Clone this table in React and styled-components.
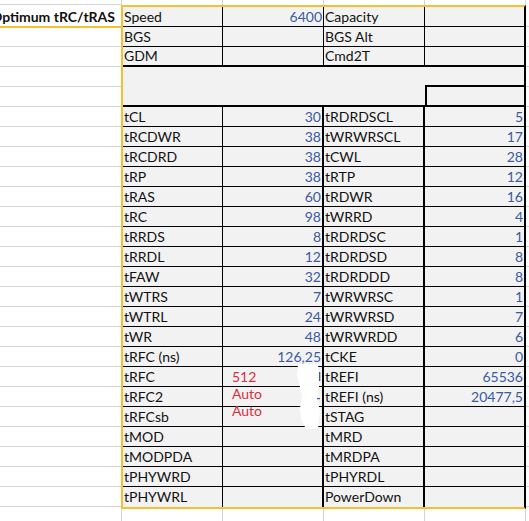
import React from "react";
import styled, { createGlobalStyle } from "styled-components";

const GRID = "#d4d4d4";
const GOLD = "#f6c130";
const FILL = "#f2f2f2";
const INK = "#111";
const BLUE = "#3a5ba0";
const RED = "#d5303e";

const GlobalStyle = createGlobalStyle`
  html, body { margin: 0; padding: 0; background: #fff; }
  body { font-family: Lato, "Open Sans", sans-serif; }
`;

const Sheet = styled.div`
  position: relative;
  width: 529px;
  height: 521px;
  overflow: hidden;
  display: flex;
  flex-direction: column;
  font-family: Lato, "Open Sans", sans-serif;
  font-size: 14px;
  color: ${INK};
  background: #fff;
`;

const Strip = styled.div`
  display: flex;
  flex: none;
  height: ${(p) => p.$h}px;
`;

const StripCell = styled.div`
  flex: ${(p) => (p.$w ? "none" : "1")};
  width: ${(p) => (p.$w ? `${p.$w}px` : "auto")};
  box-sizing: border-box;
  border-right: ${(p) => (p.$w ? `1px solid ${GRID}` : "none")};
  border-bottom: ${(p) => (p.$line ? `1px solid ${GRID}` : "none")};
`;

const Middle = styled.div`
  display: flex;
  flex: none;
  height: 504px;
`;

const SideColumn = styled.div`
  flex: none;
  width: ${(p) => (p.$w ? `${p.$w}px` : "auto")};
  flex-grow: ${(p) => (p.$w ? 0 : 1)};
  padding-top: 2px;
  display: flex;
  flex-direction: column;
  box-sizing: border-box;
`;

const SideCell = styled.div`
  flex: none;
  height: ${(p) => p.$h || 20}px;
  box-sizing: border-box;
  border-bottom: ${(p) => (p.$gold ? `2px solid ${GOLD}` : `1px solid ${GRID}`)};
  display: flex;
  align-items: center;
  justify-content: flex-end;
  padding-right: 6px;
  overflow: hidden;
  white-space: nowrap;
  font-weight: 700;
  letter-spacing: 0;
`;

const Table = styled.div`
  flex: none;
  width: 405px;
  box-sizing: border-box;
  border-top: 2px solid ${GOLD};
  border-left: 2px solid ${GOLD};
  border-bottom: 2px solid ${GOLD};
  border-right: 2px solid #000;
  display: grid;
  grid-template-columns: 100px 101px 101px 99px;
  grid-template-rows: repeat(25, 20px);
  background: ${FILL};
`;

const Cell = styled.div`
  box-sizing: border-box;
  background: ${FILL};
  border-bottom: ${(p) => p.$bb || 0}px solid #000;
  border-right: ${(p) => p.$br || 0}px solid #000;
  border-left: ${(p) => p.$bl || 0}px solid #000;
  display: flex;
  align-items: center;
  justify-content: ${(p) => (p.$kind === "num" ? "flex-end" : "flex-start")};
  padding-left: ${(p) => (p.$kind === "red" ? 9 : 1)}px;
  padding-right: 1px;
  padding-bottom: ${(p) => (p.$lift || 0) * 2}px;
  color: ${(p) => (p.$kind === "num" ? BLUE : p.$kind === "red" ? RED : INK)};
  white-space: nowrap;
  overflow: ${(p) => (p.$kind === "red" ? "visible" : "hidden")};
  line-height: 1;
`;

const Merged = styled.div`
  grid-column: 1 / span 3;
  grid-row: span 2;
  box-sizing: border-box;
  background: ${FILL};
  border-bottom: 2px solid #000;
`;

const Redaction = styled.svg`
  position: absolute;
  left: 294px;
  top: 360px;
  width: 30px;
  height: 72px;
  pointer-events: none;
`;

const topRows = [
  ["Speed", "6400", "Capacity", ""],
  ["BGS", "", "BGS Alt", ""],
  ["GDM", "", "Cmd2T", ""],
];

const mainRows = [
  ["tCL", "30", "tRDRDSCL", "5"],
  ["tRCDWR", "38", "tWRWRSCL", "17"],
  ["tRCDRD", "38", "tCWL", "28"],
  ["tRP", "38", "tRTP", "12"],
  ["tRAS", "60", "tRDWR", "16"],
  ["tRC", "98", "tWRRD", "4"],
  ["tRRDS", "8", "tRDRDSC", "1"],
  ["tRRDL", "12", "tRDRDSD", "8"],
  ["tFAW", "32", "tRDRDDD", "8"],
  ["tWTRS", "7", "tWRWRSC", "1"],
  ["tWTRL", "24", "tWRWRSD", "7"],
  ["tWR", "48", "tWRWRDD", "6"],
  ["tRFC (ns)", "126,25", "tCKE", "0"],
  ["tRFC", { red: "512", lift: 0 }, "tREFI", "65536"],
  ["tRFC2", { red: "Auto", lift: 3 }, "tREFI (ns)", "20477,5"],
  ["tRFCsb", { red: "Auto", lift: 5.5 }, "tSTAG", ""],
  ["tMOD", "", "tMRD", ""],
  ["tMODPDA", "", "tMRDPA", ""],
  ["tPHYWRD", "", "tPHYRDL", ""],
  ["tPHYWRL", "", "PowerDown", ""],
];

const stripWidths = [122, 101, 101, 101, 101];

function GridStrip({ h, line }) {
  return (
    <Strip $h={h}>
      {stripWidths.map((w, i) => (
        <StripCell key={i} $w={w} $line={line && i === 0} />
      ))}
      <StripCell />
    </Strip>
  );
}

function ValueCell({ v, bb, br }) {
  if (v && typeof v === "object") {
    return (
      <Cell $kind="red" $lift={v.lift} $bb={bb} $br={br}>
        {v.red}
      </Cell>
    );
  }
  return (
    <Cell $kind="num" $bb={bb} $br={br}>
      {v}
    </Cell>
  );
}

export default function App() {
  return (
    <>
      <GlobalStyle />
      <Sheet>
        <GridStrip h={5} line />
        <Middle>
          <SideColumn $w={121}>
            <SideCell $h={21} $gold>
              Optimum tRC/tRAS
            </SideCell>
            <SideCell $h={19} />
            {Array.from({ length: 23 }).map((_, i) => (
              <SideCell key={i} />
            ))}
          </SideColumn>
          <Table>
            {topRows.map((r, i) => {
              const bb = i === 2 ? 2 : 1;
              return (
                <React.Fragment key={`t${i}`}>
                  <Cell $bb={bb} $br={1}>{r[0]}</Cell>
                  <ValueCell v={r[1]} bb={bb} br={1} />
                  <Cell $bb={bb} $br={1}>{r[2]}</Cell>
                  <ValueCell v={r[3]} bb={bb} br={0} />
                </React.Fragment>
              );
            })}
            <Merged />
            <Cell $bb={2} />
            <Cell $bb={2} $bl={2} />
            {mainRows.map((r, i) => {
              const bb = i === mainRows.length - 1 ? 0 : 1;
              return (
                <React.Fragment key={`m${i}`}>
                  <Cell $bb={bb} $br={1}>{r[0]}</Cell>
                  <ValueCell v={r[1]} bb={bb} br={2} />
                  <Cell $bb={bb} $br={2}>{r[2]}</Cell>
                  <ValueCell v={r[3]} bb={bb} br={0} />
                </React.Fragment>
              );
            })}
          </Table>
          <SideColumn>
            {Array.from({ length: 25 }).map((_, i) => (
              <SideCell key={i} />
            ))}
          </SideColumn>
        </Middle>
        <GridStrip h={12} />
        <Redaction viewBox="294 360 30 72">
          <path
            d="M298 364 L318 364 L319 386 L317 399 L320 410 L318 429 L306 429 L301 419 L300 408 L302 396 L300 387 L297 376 Z"
            fill="#fff"
          />
          <rect x="319" y="372" width="1.3" height="9" fill={BLUE} />
          <rect x="317" y="398" width="3" height="1.2" fill={BLUE} />
        </Redaction>
      </Sheet>
    </>
  );
}
